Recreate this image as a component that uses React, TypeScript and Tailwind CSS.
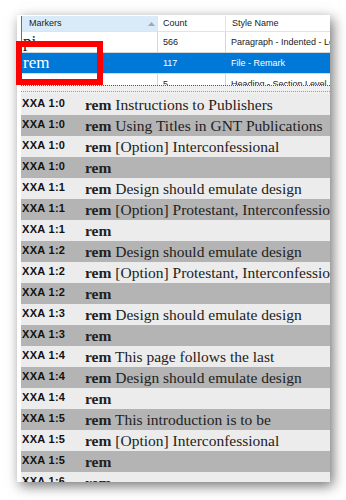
import React from 'react';

interface Verse {
  ref: string;
  text: string;
}

const verses: Verse[] = [
  { ref: 'XXA 1:0', text: 'Instructions to Publishers' },
  { ref: 'XXA 1:0', text: 'Using Titles in GNT Publications' },
  { ref: 'XXA 1:0', text: '[Option] Interconfessional' },
  { ref: 'XXA 1:0', text: '' },
  { ref: 'XXA 1:1', text: 'Design should emulate design' },
  { ref: 'XXA 1:1', text: '[Option] Protestant, Interconfessional' },
  { ref: 'XXA 1:1', text: '' },
  { ref: 'XXA 1:2', text: 'Design should emulate design' },
  { ref: 'XXA 1:2', text: '[Option] Protestant, Interconfessional' },
  { ref: 'XXA 1:2', text: '' },
  { ref: 'XXA 1:3', text: 'Design should emulate design' },
  { ref: 'XXA 1:3', text: '' },
  { ref: 'XXA 1:4', text: 'This page follows the last' },
  { ref: 'XXA 1:4', text: 'Design should emulate design' },
  { ref: 'XXA 1:4', text: '' },
  { ref: 'XXA 1:5', text: 'This introduction is to be' },
  { ref: 'XXA 1:5', text: '[Option] Interconfessional' },
  { ref: 'XXA 1:5', text: '' },
  { ref: 'XXA 1:6', text: '' },
];

const markers = [
  { marker: 'pi', count: '566', style: 'Paragraph - Indented - Level 1' },
  { marker: 'rem', count: '117', style: 'File - Remark', selected: true },
  { marker: 's', count: '5', style: 'Heading - Section Level 1' },
];

const sans = "font-['Liberation_Sans',Arial,sans-serif]";
const serif = "font-['Liberation_Serif','Times_New_Roman',serif]";

function MarkerGrid() {
  return (
    <div className={`h-[69px] overflow-hidden border-l border-[#6e6e6e] text-[9px] text-[#1a1a1a] ${sans}`}>
      {/* header */}
      <div className="flex h-[16px] border-b border-[#e3e3e3] leading-[15px]">
        <div className="relative w-[136px] shrink-0 border-r border-[#e3e3e3] bg-[#d9ebf9] pl-[7px]">
          Markers
          <svg className="absolute left-[126px] top-[6px]" width="7" height="4" viewBox="0 0 7 4">
            <path d="M0 4 L3.5 0 L7 4 Z" fill="#a0a8b0" />
          </svg>
        </div>
        <div className="w-[68px] shrink-0 border-r border-[#e3e3e3] pl-[5px]">Count</div>
        <div className="flex-1 pl-[6px]">Style Name</div>
      </div>
      {markers.map((m) => (
        <div
          key={m.marker}
          className={`flex h-[21px] border-b border-[#d6d6d6] ${m.selected ? 'bg-[#0078d7] text-white' : 'bg-white'}`}
        >
          <div className={`w-[136px] shrink-0 pl-[1px] text-[17px] leading-[20px] ${serif} ${m.selected ? '' : 'border-r border-[#d6d6d6]'}`}>
            {m.marker}
          </div>
          <div className={`w-[68px] shrink-0 pl-[5px] leading-[20px] ${m.selected ? '' : 'border-r border-[#d6d6d6]'}`}>
            {m.count}
          </div>
          <div className="flex-1 overflow-hidden whitespace-nowrap pl-[5px] leading-[20px]">{m.style}</div>
        </div>
      ))}
    </div>
  );
}

export default function App() {
  return (
    <div className="h-[500px] w-[346px] bg-white pl-[17px] pt-[15px]">
      <div className="flex h-[467px] w-[313px] flex-col bg-white pt-[1px] pl-[4px] shadow-[3px_4px_12px_rgba(0,0,0,0.55)]">
        <div className="relative">
          <MarkerGrid />
          {/* highlight drawn over the selected marker */}
          <div className="absolute left-[-5px] top-[25px] h-[44px] w-[87px] border-[6px] border-[#ff0000]" />
        </div>

        {/* splitter */}
        <div className="flex h-[9px] flex-col border-t border-dotted border-[#5a5a5a] bg-[#f0f0f0]">
          <div className="mt-[5px] border-t border-dotted border-[#9a9a9a]" />
        </div>

        <div className="flex-1 overflow-hidden">
          {verses.map((v, i) => (
            <div
              key={i}
              className={`flex h-[21px] items-start overflow-hidden whitespace-nowrap ${i % 2 === 0 ? 'bg-[#ececec]' : 'bg-[#b4b4b4]'}`}
            >
              <span className={`w-[64px] shrink-0 pl-[1px] text-[11px] font-bold leading-[19px] tracking-[0.3px] text-[#111] ${sans}`}>
                {v.ref}
              </span>
              <span className={`text-[15.5px] leading-[22px] text-[#222] ${serif}`}>
                <b>rem</b>
                {v.text && ` ${v.text}`}
              </span>
            </div>
          ))}
        </div>
      </div>
    </div>
  );
}
